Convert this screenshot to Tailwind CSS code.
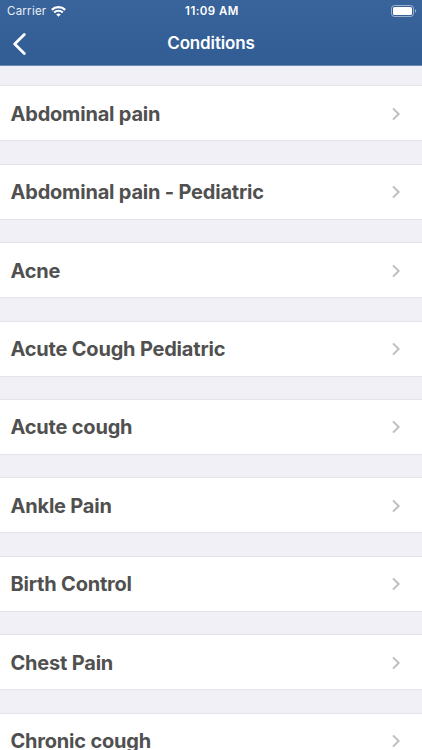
<!DOCTYPE html>
<html lang="en">
<head>
    <meta charset="UTF-8">
    <meta name="viewport" content="width=device-width, initial-scale=1.0">
    <title>Conditions</title>
    <script src="https://cdn.jsdelivr.net/npm/@tailwindcss/browser@4"></script>
</head>
<body class="h-screen overflow-hidden bg-[#f1f0f7] font-['Inter',sans-serif]">
    <header class="h-[66px] bg-linear-to-b from-[#38639b] to-[#315c94] border-b border-[#6d8bb3] text-white">
        <!-- Status bar -->
        <div class="grid grid-cols-3 items-center h-[22px] pl-[7px] pr-[5px] text-[11.5px] leading-none">
            <div class="flex items-center gap-[5px]">
                <span class="pt-px tracking-[0.25px] text-white/90">Carrier</span>
                <svg class="w-[15px] h-[11px]" viewBox="0 0 15 11" fill="none" stroke="currentColor" stroke-width="2.2">
                    <path d="M.8 3.900a9.500 9.500 0 0 1 13.400 0"/>
                    <path d="M3.200 6.500a6.100 6.100 0 0 1 8.600 0"/>
                    <path d="M7.500 10.700 5.200 8.500a3.300 3.300 0 0 1 4.600 0Z" fill="currentColor" stroke="none"/>
                </svg>
            </div>
            <span class="pt-px text-center font-semibold tracking-[0.45px] whitespace-nowrap">11:09 AM</span>
            <svg class="justify-self-end w-[26px] h-[12px]" viewBox="0 0 26 12" fill="none">
                <rect x=".5" y=".5" width="22" height="11" rx="3" stroke="#fff" stroke-opacity=".5"/>
                <rect x="2" y="2" width="19" height="8" rx="1.6" fill="#fff"/>
                <path d="M24 4.300v3.400c1-.4 1.200-1 1.200-1.700S25 4.700 24 4.300Z" fill="#fff" fill-opacity=".5"/>
            </svg>
        </div>
        <!-- Nav bar -->
        <div class="grid grid-cols-3 items-center h-[43px] pl-[12px] pr-[12px]">
            <svg class="w-[15px] h-[22px]" viewBox="0 0 15 22" fill="none" stroke="currentColor" stroke-width="2.8" stroke-linecap="round" stroke-linejoin="round">
                <path d="M12.300 1.600 2.700 11l9.600 9.400"/>
            </svg>
            <h1 class="text-center text-[17px] font-semibold tracking-[-0.15px]">Conditions</h1>
        </div>
    </header>

    <main id="list" class="flex flex-col gap-[22.4px] pt-[19.4px]"></main>

    <template id="row">
        <a class="flex shrink-0 items-center justify-between h-[56px] pt-px pl-[10.500px] pr-[21px] bg-white border-y border-[#e4e3e9] text-[#505050]">
            <span class="text-[20px] leading-6 font-[650] tracking-[-0.2px]"></span>
            <svg class="w-[10px] h-[14px] text-[#bdbdc1]" viewBox="0 0 10 14" fill="none" stroke="currentColor" stroke-width="1.900">
                <path d="m2 1.300 5.700 5.700L2 12.700"/>
            </svg>
        </a>
    </template>

    <script>
        const conditions = [
            'Abdominal pain',
            'Abdominal pain - Pediatric',
            'Acne',
            'Acute Cough Pediatric',
            'Acute cough',
            'Ankle Pain',
            'Birth Control',
            'Chest Pain',
            'Chronic cough',
        ];

        const list = document.getElementById('list');
        const row = document.getElementById('row');

        conditions.forEach((name) => {
            const item = row.content.cloneNode(true);
            item.querySelector('span').textContent = name;
            list.appendChild(item);
        });
    </script>
</body>
</html>
